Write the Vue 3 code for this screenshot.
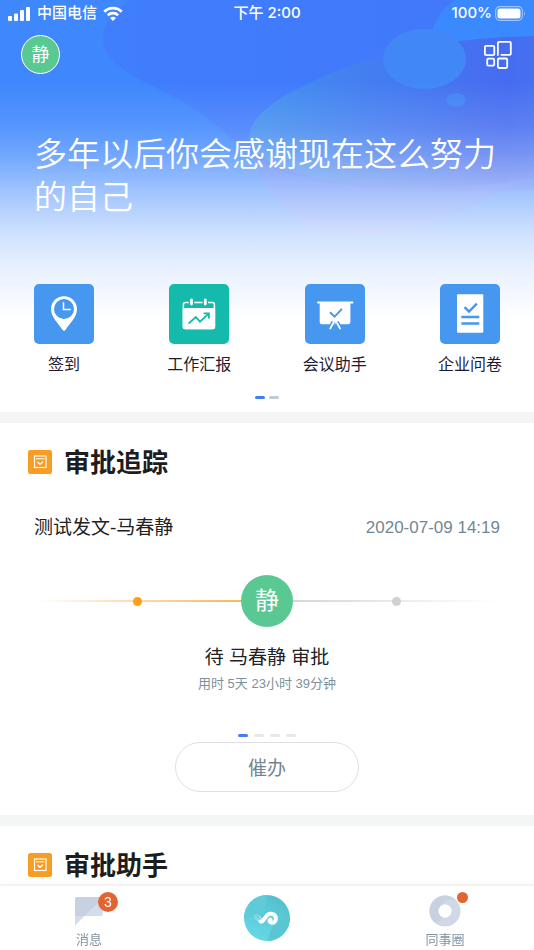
<script setup>
const apps = [
  { label: '签到', icon: 'pin' },
  { label: '工作汇报', icon: 'report' },
  { label: '会议助手', icon: 'meeting' },
  { label: '企业问卷', icon: 'survey' },
]
</script>

<template>
  <div class="page">
    <header class="hero">
      <svg class="hero-bg" viewBox="0 0 534 330" preserveAspectRatio="none" aria-hidden="true">
        <defs>
          <linearGradient id="lake" x1="0" y1="0" x2="1" y2="0">
            <stop offset="0" stop-color="#4292ee" />
            <stop offset=".5" stop-color="#447bf0" />
            <stop offset=".9" stop-color="#466bef" />
            <stop offset="1" stop-color="#4670f0" />
          </linearGradient>
          <linearGradient id="deep" x1="0" y1="0" x2="1" y2="0">
            <stop offset="0" stop-color="#3f7efd" />
            <stop offset="1" stop-color="#4277fa" />
          </linearGradient>
          <linearGradient id="fade" x1="0" y1="0" x2="0" y2="1">
            <stop offset=".25" stop-color="#fff" stop-opacity="0" />
            <stop offset=".39" stop-color="#fff" stop-opacity=".13" />
            <stop offset=".47" stop-color="#fff" stop-opacity=".27" />
            <stop offset=".59" stop-color="#fff" stop-opacity=".53" />
            <stop offset=".7" stop-color="#fff" stop-opacity=".74" />
            <stop offset=".82" stop-color="#fff" stop-opacity=".89" />
            <stop offset=".97" stop-color="#fff" />
          </linearGradient>
        </defs>
        <rect width="534" height="330" fill="#3e87fd" />
        <path d="M130 0C111 13 103 24 103 39C103 56 121 70 146 83C177 98 207 113 235 142C270 180 340 195 534 190V0Z" fill="url(#deep)" />
        <path d="M455 0C438 12 433 24 433 34Q433 39 434 44L534 37V0Z" fill="#3a89ff" />
        <path d="M250 130C252 180 283 232 352 235C420 239 462 205 534 178V110Z" fill="#6870f2" fill-opacity=".35" />
        <path d="M534 36C440 38 374 54 325 76C278 96 249 116 249 139C249 163 318 187 415 187C466 187 500 184 534 178Z" fill="url(#lake)" fill-opacity=".92" />
        <ellipse cx="424.500" cy="59" rx="41.500" ry="30" fill="#4188f6" />
        <ellipse cx="456" cy="100" rx="9.500" ry="7" fill="#4084f4" />
        <rect width="534" height="330" fill="url(#fade)" />
      </svg>

      <div class="status">
        <div class="status-left">
          <svg width="23" height="15" viewBox="0 0 23 15" fill="#fff" aria-hidden="true">
            <rect x="0" y="10" width="4" height="5" rx="1" /><rect x="6" y="7.500" width="4" height="7.500" rx="1" />
            <rect x="12" y="4" width="4" height="11" rx="1" /><rect x="18" y="1" width="4" height="14" rx="1" />
          </svg>
          <span>中国电信</span>
          <svg width="20" height="15" viewBox="0 0 20 15" fill="none" stroke="#fff" stroke-width="2.800" aria-hidden="true">
            <path d="M1.300 5.800C6.200 1 13.800 1 18.700 5.800" /><path d="M4.800 9.300C7.700 6.500 12.300 6.500 15.200 9.300" />
            <path d="M10 15L7 12.100Q10 9.400 13 12.100Z" fill="#fff" stroke="none" />
          </svg>
        </div>
        <div class="status-time">下午 2:00</div>
        <div class="status-right">
          <span>100%</span>
          <svg width="31" height="15" viewBox="0 0 31 15" aria-hidden="true">
            <rect x=".7" y=".7" width="26.600" height="13.600" rx="4" fill="none" stroke="#fff" stroke-opacity=".5" stroke-width="1.200" />
            <rect x="2.500" y="2.500" width="23" height="10" rx="2.300" fill="#fff" />
            <path d="M29 5Q30.800 7.500 29 10Z" fill="#fff" fill-opacity=".5" />
          </svg>
        </div>
      </div>

      <div class="topbar">
        <button class="avatar small" type="button" aria-label="静">静</button>
        <button class="grid-btn" type="button" aria-label="应用">
          <svg width="28" height="28" viewBox="0 0 28 28" fill="none" stroke="#fff" stroke-width="1.800" stroke-linejoin="round" stroke-linecap="round">
            <rect x=".9" y="4.900" width="9.400" height="9.200" rx="1.200" />
            <path d="M13.900 14.100V2Q13.900 .9 15 .9H25.700Q26.800 .9 26.800 2V12.800Q26.800 13.900 25.700 13.900H17.500" />
            <rect x="3.200" y="17.700" width="7" height="7" rx="1.200" />
            <rect x="13.900" y="17.500" width="9.300" height="9.500" rx="1.200" />
          </svg>
        </button>
      </div>

      <h1>多年以后你会感谢现在这么努力的自己</h1>

      <nav class="apps">
        <a v-for="a in apps" :key="a.label" class="app" href="#">
          <svg class="tile" :class="{ teal: a.icon === 'report' }" viewBox="0 0 60 60" aria-hidden="true">
            <g v-if="a.icon === 'pin'">
              <path d="M30 12.300C22.500 12.300 17 18 17 25.200C17 33.500 25.500 40.500 28.200 45.500Q30 48 31.800 45.500C34.500 40.500 43 33.500 43 25.200C43 18 37.500 12.300 30 12.300Z" fill="#fff" />
              <circle cx="30" cy="25" r="10" fill="#4597f0" />
              <path d="M29.500 18.300V25.400H36.800" fill="none" stroke="#fff" stroke-width="1.500" />
            </g>
            <g v-else-if="a.icon === 'report'">
              <rect x="14.400" y="18.400" width="31" height="26" rx="2" fill="none" stroke="#fff" stroke-width="1.500" />
              <path d="M13.700 24H46.200V43Q46.200 45.300 44 45.300H16Q13.700 45.300 13.700 43Z" fill="#fff" />
              <path d="M22.500 16V20M36.300 16V20" stroke="#14bbac" stroke-width="5.500" stroke-linecap="round" />
              <path d="M22.500 16V20M36.300 16V20" stroke="#fff" stroke-width="2.800" stroke-linecap="round" />
              <path d="M19.500 39.700L26.800 33L31 37.700L39.600 29.700M34.600 29.400H39.900V34.500" fill="none" stroke="#14bbac" stroke-width="1.800" />
            </g>
            <g v-else-if="a.icon === 'meeting'">
              <path d="M13 18.500H47.500" stroke="#fff" stroke-width="2" stroke-linecap="round" />
              <path d="M14.700 19H45.400V38Q45.400 40.300 43 40.300H17Q14.700 40.300 14.700 38Z" fill="#fff" />
              <path d="M28.300 38L25 44.600M32 38L35.300 44.600" stroke="#4597f0" stroke-width="4" />
              <path d="M28.300 39L25.300 44.400M32 39L35 44.400" stroke="#fff" stroke-width="1.900" stroke-linecap="round" />
              <path d="M25 28.300L29.600 32.700L37 24.900" fill="none" stroke="#4597f0" stroke-width="1.900" />
            </g>
            <g v-else>
              <rect x="17" y="10.300" width="26.300" height="38.500" rx="1" fill="#fff" />
              <path d="M24.600 23.200L29 27.600L36.900 19.700" fill="none" stroke="#4597f0" stroke-width="2.400" />
              <path d="M21.300 33H39.300M21.300 39.500H39.300" stroke="#4597f0" stroke-width="2.300" />
            </g>
          </svg>
          <span>{{ a.label }}</span>
        </a>
      </nav>
      <div class="dots app-dots"><i class="on"></i><i class="grey"></i></div>
    </header>

    <section class="card track">
      <div class="card-title">
        <svg width="24" height="24" viewBox="0 0 24 24" fill="none" aria-hidden="true">
          <rect width="24" height="24" rx="2.500" fill="#f79d24" />
          <rect x="6.500" y="6" width="11.500" height="11.500" stroke="#fff" stroke-width="1.200" />
          <path d="M8 8.800H16.500" stroke="#fff" /><path d="M9.500 12L12 14.300L15 11.700" stroke="#fff" stroke-width="1.400" />
        </svg>
        <h2>审批追踪</h2>
      </div>
      <div class="doc"><span>测试发文-马春静</span><time>2020-07-09 14:19</time></div>
      <div class="timeline">
        <div class="line past"><i></i></div>
        <div class="avatar">静</div>
        <div class="line next"><i></i></div>
      </div>
      <p class="who">待 马春静 审批</p>
      <p class="spent">用时 5天 23小时 39分钟</p>
      <div class="dots"><i class="on"></i><i></i><i></i><i></i></div>
      <button class="urge" type="button">催办</button>
    </section>

    <section class="card">
      <div class="card-title">
        <svg width="24" height="24" viewBox="0 0 24 24" fill="none" aria-hidden="true">
          <rect width="24" height="24" rx="2.500" fill="#f79d24" />
          <rect x="6.500" y="6" width="11.500" height="11.500" stroke="#fff" stroke-width="1.200" />
          <path d="M8 8.800H16.500" stroke="#fff" /><path d="M9.500 12L12 14.300L15 11.700" stroke="#fff" stroke-width="1.400" />
        </svg>
        <h2>审批助手</h2>
      </div>
    </section>

    <nav class="tabs">
      <a href="#" class="tab">
        <span class="tab-icon">
          <svg width="28" height="29" viewBox="0 0 28 29" aria-hidden="true">
            <path d="M2 0H26Q28 0 28 2V17Q28 19 26 19H9.500L0 28.500V2Q0 0 2 0Z" fill="#d5ddea" />
            <path d="M2 0H26Q27.500 0 28 1L9.500 19H0V2Q0 0 2 0Z" fill="#c8d1e1" />
          </svg>
          <b class="badge">3</b>
        </span>
        <span>消息</span>
      </a>
      <a href="#" class="tab center" aria-label="工作台">
        <svg width="46" height="46" viewBox="0 0 46 46" aria-hidden="true">
          <defs>
            <linearGradient id="orb" x1=".7" y1="0" x2=".3" y2="1">
              <stop offset="0" stop-color="#53bfcb" /><stop offset="1" stop-color="#67d8e7" />
            </linearGradient>
          </defs>
          <circle cx="23" cy="23" r="23" fill="url(#orb)" />
          <path d="M23 0A23 23 0 0 0 0 23C11 22 24 16 23 0Z" fill="#5fcbd9" />
          <path d="M46 23C36 24 25 31 24 46A23 23 0 0 0 46 23Z" fill="#5ac6d3" />
          <path d="M16.500 26.500C20.500 28 20.500 19.500 26 18.800C33.500 18 33.500 28 28 27.800C25.500 27.600 25 25.300 26.500 24.600" fill="none" stroke="#fff" stroke-width="4" stroke-linecap="round" />
          <path d="M10 20L16 25.500M12.500 19L17 24M9.500 22.500L15 26.500M15.500 21L18 24" stroke="#fff" stroke-opacity=".6" stroke-width=".8" />
        </svg>
      </a>
      <a href="#" class="tab">
        <span class="tab-icon">
          <svg class="ring" width="32" height="32" viewBox="0 0 32 32" aria-hidden="true">
            <circle cx="16" cy="16" r="11" fill="none" stroke="#d0d8e6" stroke-width="9" />
            <path d="M26.500 4.500C16 2.500 10.500 10 9.500 17Q10 21 13 22C12 26 9 28.500 5.500 27.500A15.500 15.500 0 0 1 26.500 4.500Z" fill="#c8d1e2" />
            <circle cx="16" cy="16" r="6.500" fill="#fff" />
          </svg>
          <i class="dot"></i>
        </span>
        <span>同事圈</span>
      </a>
    </nav>
  </div>
</template>

<style>
body { margin: 0; background: #fff; }
</style>

<style scoped>
.page {
  min-height: 100vh;
  box-sizing: border-box;
  padding-bottom: 64px;
  background: #f4f6f6;
  color: #222;
  font-family: "Liberation Sans", "Noto Sans CJK SC", sans-serif;
}
a { color: inherit; text-decoration: none; }
button { padding: 0; border: 0; background: none; font-family: inherit; }
h1, h2, p { margin: 0; }

.hero { position: relative; isolation: isolate; background: #fff; padding-bottom: 13px; }
.hero-bg { position: absolute; inset: 0; z-index: -1; width: 100%; height: 330px; }

.status {
  display: grid;
  grid-template-columns: 1fr auto 1fr;
  align-items: center;
  height: 26px;
  padding: 0 8px;
  color: #fff;
  font: 500 15px/26px Inter, "Noto Sans CJK SC", sans-serif;
}
.status-left, .status-right { display: flex; align-items: center; gap: 6px; }
.status-right { justify-content: flex-end; gap: 3px; }

.topbar {
  display: flex;
  justify-content: space-between;
  align-items: center;
  padding: 9px 22px 0 21px;
}
.grid-btn { display: flex; }
.avatar {
  display: grid;
  place-items: center;
  flex: none;
  box-sizing: border-box;
  width: 52px;
  height: 52px;
  border-radius: 50%;
  background: #5ac893;
  color: #fff;
  font-size: 24px;
  line-height: 24px;
}
.avatar.small { width: 39px; height: 39px; border: 1px solid #fff; font-size: 18px; }

h1 {
  padding: 57px 34px 0;
  color: #fff;
  font-size: 33px;
  line-height: 43px;
  font-weight: 350;
  word-break: break-all;
  font-family: "Noto Sans CJK SC", sans-serif;
}

.apps { display: flex; justify-content: space-between; padding: 67px 34px 0; }
.app {
  display: flex;
  flex-direction: column;
  align-items: center;
  gap: 9px;
  width: 60px;
  color: #1f1a35;
  font-size: 16px;
  line-height: 24px;
  white-space: nowrap;
}
.tile { width: 60px; height: 60px; border-radius: 5px; background: #4597f0; }
.tile.teal { background: #14bbac; }

.dots { display: flex; justify-content: center; gap: 6px; }
.dots i { width: 10px; height: 3px; border-radius: 2px; background: #e5e7ee; }
.dots .on { background: #417df6; }
.dots .grey { background: #bfcbd3; }
.app-dots { gap: 4px; padding-top: 19px; }

.card { margin-top: 11px; padding: 20px 34px 0; background: #fff; }
.card-title { display: flex; align-items: center; gap: 12px; height: 38px; margin-left: -6px; }
h2 { padding-top: 2px; font-size: 26px; line-height: 38px; font-weight: 700; color: #1d1d1d; }
.track { padding-bottom: 23px; }
.doc {
  display: flex;
  justify-content: space-between;
  align-items: center;
  padding-top: 33px;
  font-size: 19px;
  line-height: 28px;
}
time { color: #758793; font-size: 17px; }

.timeline { display: flex; align-items: center; padding-top: 33px; }
.line { display: flex; align-items: center; justify-content: center; flex: 1; height: 2px; }
.line i { width: 9px; height: 9px; border-radius: 50%; }
.past { background: linear-gradient(90deg, #fff, #f9b561); }
.past i { background: #ff9f1c; }
.next { background: linear-gradient(90deg, #d6d6d6, #fff); }
.next i { background: #d0d1d3; }
.who { padding-top: 17px; text-align: center; font-size: 19px; line-height: 28px; }
.spent { padding: 2px 0 40px; text-align: center; font-size: 13px; line-height: 20px; color: #7d909d; }
.urge {
  display: block;
  box-sizing: border-box;
  width: 184px;
  height: 50px;
  margin: 5px auto 0;
  padding-bottom: 2px;
  border: 1px solid #dfe0e1;
  border-radius: 25px;
  background: #fff;
  color: #728590;
  font-size: 19px;
}

.tabs {
  position: fixed;
  left: 0;
  right: 0;
  bottom: 0;
  display: flex;
  justify-content: space-between;
  height: 64px;
  background: #fff;
  box-shadow: 0 -4px 10px rgba(0, 0, 0, .02);
}
.tab {
  display: flex;
  flex-direction: column;
  align-items: center;
  justify-content: flex-end;
  width: 178px;
  font-size: 13px;
  line-height: 20px;
  color: #8494a0;
}
.tab.center { justify-content: center; }
.tab-icon { position: relative; display: flex; justify-content: center; width: 32px; height: 33px; }
.ring { margin-top: -2px; }
.badge, .dot { position: absolute; border-radius: 50%; background: #e16531; }
.badge {
  top: -5px;
  right: -13px;
  width: 20px;
  height: 20px;
  color: #fff;
  font-size: 14px;
  font-weight: 400;
  text-align: center;
}
.dot { top: -5px; right: -7px; width: 11px; height: 11px; }
</style>
